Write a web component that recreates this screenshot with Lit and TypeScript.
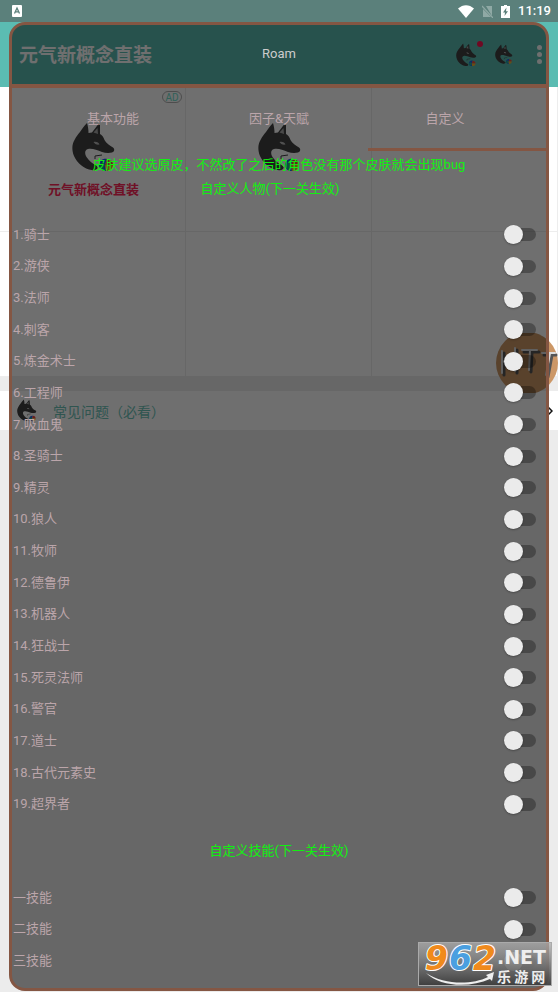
import { LitElement, html, css, svg } from "lit";
import { customElement, property, state } from "lit/decorators.js";
import { classMap } from "lit/directives/class-map.js";

@customElement("wolf-icon")
class WolfIcon extends LitElement {
  static styles = css`
    :host { display: block; }
    svg { display: block; width: 100%; height: auto; }
  `;
  render() {
    return html`<svg viewBox="0 0 44 50" aria-hidden="true">${svg`
      <path fill="#404040" d="M15 1 C16 4 16.5 8 16.5 11 L20 10.5 C22 8 24 5 26.5 2 C27.5 5 28 8 28 12 C30 13 31.5 15 32.5 18 C34 21 38 24 41 25.5 C43 27 42.500 30 40 30.500 C37 31.300 33 31 30 30 C25 28 20 26 16 27 C12.500 28 12.500 32 14.500 35 C17 39 21 42 25 44 C27 46 24 49 20 48 C12 47 5 41 2 34 C-0.500 28 0 22 2.500 18 C4 15 6 12 8 10 C10 7 12 4 15 1Z"/>
      <path fill="none" stroke="#404040" stroke-width="1" d="M27.500 3 V13 M23 37 L23 34 L30 33"/>
      <path fill="#b8b8b8" d="M21.500 20 C24 19 27 20.500 27.500 22.500 C25 23 22.500 22 21.500 20Z"/>
      <path fill="#a8a8a8" d="M21.500 10.500 L25.500 6 L26 12Z"/>
      <path fill="#1d62e8" d="M35 37 C31 36 27 39 27 43 C27 47 30 49 34 49 L33 43Z"/>
      <path fill="#1fae96" d="M27 43 L31 40 L33 43 L31 48 C28 47 27 45 27 43Z"/>
      <path fill="#f0483c" d="M35 37 C39 37 41 40 41 43 L33 43Z"/>
      <path fill="#f0b030" d="M33 43 L41 43 C41 46 38 49 34 49Z"/>
    `}</svg>`;
  }
}

@customElement("switch-row")
class SwitchRow extends LitElement {
  @property() label = "";
  static styles = css`
    :host { display: block; }
    .row { height: 100%; display: flex; align-items: center; justify-content: space-between; padding-right: 10px; }
    .name { font-size: 13px; line-height: 20px; color: #bba5aa; }
    .switch { appearance: none; margin: 0; width: 32px; height: 20px; display: grid; align-items: center; }
    .switch::before, .switch::after { content: ""; grid-area: 1 / 1; }
    .switch::before { height: 13px; margin-left: 5px; border-radius: 7px; background: rgba(0, 0, 0, 0.3); }
    .switch::after { width: 19px; height: 19px; border-radius: 50%; background: #ebebeb; box-shadow: 0 1px 2px rgba(0, 0, 0, 0.3); }
    .switch:checked::after { justify-self: end; }
  `;
  render() {
    return html`<label class="row"><span class="name">${this.label}</span><input class="switch" type="checkbox" /></label>`;
  }
}

@customElement("app-root")
class AppRoot extends LitElement {
  @state() tab = 2;

  tabs = ["基本功能", "因子&天赋", "自定义"];
  heroes = ["骑士", "游侠", "法师", "刺客", "炼金术士", "工程师", "吸血鬼", "圣骑士", "精灵", "狼人", "牧师", "德鲁伊", "机器人", "狂战士", "死灵法师", "警官", "道士", "古代元素史", "超界者"];
  skills = ["一技能", "二技能", "三技能"];

  static styles = css`
    :host {
      display: grid; position: relative; min-height: 100vh; overflow: hidden;
      grid-template-columns: minmax(0, 1fr);
      font-family: Roboto, "Noto Sans CJK SC", sans-serif;
    }
    button { border: 0; padding: 0; background: none; font: inherit; color: inherit; }
    .base, .panel { grid-area: 1 / 1; }

    .base { position: relative; background: #ececec; }
    .status { height: 22px; padding: 0 7px 0 12px; display: flex; align-items: center; justify-content: space-between; background: #5b807b; color: #fff; }
    .signals { display: flex; align-items: center; gap: 8px; }
    .signals svg, .status svg { display: block; }
    .time { font-size: 13px; font-weight: 500; line-height: 22px; }
    .bar { height: 65px; display: flex; align-items: center; padding: 0 16px 0 19px; background: #5bbcb2; }
    .title { flex: 1; margin: 0; padding-top: 3px; font-size: 19px; line-height: 28px; font-weight: 700; color: #fff; }
    .actions { display: flex; align-items: center; gap: 18px; }
    .action { position: relative; display: block; }
    .big { width: 21px; }
    .small { width: 18px; }
    .dot { position: absolute; right: -6px; top: -2px; width: 6px; height: 6px; border-radius: 50%; background: #ff1450; }
    .more { display: grid; gap: 2px; margin-left: 6px; }
    .more i { width: 5px; height: 5px; border-radius: 50%; background: #fff; }

    .grid { display: grid; grid-template-columns: repeat(3, 1fr); grid-auto-rows: 145px; background: #fff; }
    .cell { position: relative; box-sizing: border-box; border-right: 1px solid #ededed; border-bottom: 1px solid #ededed; display: flex; flex-direction: column; align-items: center; padding: 35px 0 0 2px; }
    .cell wolf-icon { width: 44px; }
    .caption { margin-top: 8px; font-size: 13px; line-height: 20px; font-weight: 700; color: #ff2858; }
    .ad { position: absolute; right: 3px; top: 4px; box-sizing: border-box; width: 20px; height: 12px; border: 1px solid #b0b0b0; border-radius: 6px; font-size: 10px; line-height: 11px; text-align: center; color: #6fe0cc; }
    .faq { margin-top: 14px; height: 39px; display: flex; align-items: center; padding: 0 5px 0 17px; background: #fff; color: #6cc4b8; font-size: 14px; text-decoration: none; }
    .faq wolf-icon { width: 20px; margin-right: 16px; }
    .faq span { flex: 1; }
    .float { position: absolute; right: 0; top: 333px; width: 62px; height: 60px; }

    .panel { z-index: 1; margin: 22px 9px 1px; border: 3px solid #845643; border-radius: 16px; background: rgba(0, 0, 0, 0.565); display: flex; flex-direction: column; min-width: 0; }
    .name { margin: 0; height: 59px; border-bottom: 4px solid #845643; text-align: center; font-size: 13px; line-height: 58px; font-weight: 400; color: #ccc; }
    .tabs { display: grid; grid-template-columns: repeat(3, 1fr); height: 60px; padding: 0 18px; font-size: 13px; color: #bba5aa; }
    .tabs button { padding-bottom: 2px; }
    .marker { height: 3px; display: grid; grid-template-columns: repeat(3, 1fr); }
    .on { background: #845643; }
    .note { margin: 0; text-align: center; font-size: 13px; line-height: 24px; color: #12f012; }
    .first { margin-top: 2px; }
    .heroes-title { padding-right: 18px; margin-bottom: 18px; }
    .skills-title { margin: 19px 0; }
    .list { display: grid; grid-auto-rows: 1fr; padding-left: 1px; }
    .heroes { min-height: 601px; }
    .skills { min-height: 95px; margin-bottom: 11px; }

    .mark { position: absolute; z-index: 2; right: 6px; bottom: 6px; width: 134px; height: 44px; overflow: visible; }
  `;

  render() {
    return html`
      <div class="base">
        <div class="status">
          <svg width="10" height="12" viewBox="0 0 10 12"><rect width="10" height="12" rx="1" fill="#fff" /><path d="M2.5 8.5 L5 3 L7.5 8.5 M3.4 6.8 H6.6" fill="none" stroke="#5b807b" stroke-width="1.3" /></svg>
          <div class="signals">
            <svg width="16" height="13" viewBox="0 0 16 13"><path d="M0 3.5 C5 -1 11 -1 16 3.5 L8 13Z" fill="#fff" /></svg>
            <svg width="11" height="13" viewBox="0 0 11 13"><path d="M4 1 H10 V11 Z M1 4 V12 H9Z" fill="#8fa9a5" /><path d="M0 1 L11 13" stroke="#8fa9a5" stroke-width="1.2" /></svg>
            <svg width="9" height="13" viewBox="0 0 9 13"><path d="M3 0 H6 V1 H9 V13 H0 V1 H3Z" fill="#fff" /><path d="M5.5 2.5 L2 7.5 H4 L3.5 11 L7 6.2 H5Z" fill="#5b807b" /></svg>
            <span class="time">11:19</span>
          </div>
        </div>
        <header class="bar">
          <h1 class="title">元气新概念直装</h1>
          <div class="actions">
            <button class="action big" aria-label="消息"><wolf-icon></wolf-icon><span class="dot"></span></button>
            <button class="action small" aria-label="主页"><wolf-icon></wolf-icon></button>
            <button class="more" aria-label="更多"><i></i><i></i><i></i></button>
          </div>
        </header>
        <div class="grid">
          <div class="cell"><span class="ad">AD</span><wolf-icon></wolf-icon><span class="caption">元气新概念直装</span></div>
          <div class="cell"><wolf-icon></wolf-icon></div>
          <div class="cell"></div>
          <div class="cell"></div>
          <div class="cell"></div>
          <div class="cell"></div>
        </div>
        <a class="faq" href="#faq">
          <wolf-icon></wolf-icon><span>常见问题（必看）</span>
          <svg width="5" height="8" viewBox="0 0 5 8"><path d="M0.5 0.5 L4 4 L0.5 7.5" fill="none" stroke="#111" stroke-width="1.5" /></svg>
        </a>
        <svg class="float" viewBox="0 0 62 60" aria-hidden="true">
          <circle cx="31" cy="30" r="31" fill="#cc9766" />
          <g fill="none" stroke-width="3" stroke-linecap="round">
            <path stroke="#555" d="M8 20 V42 M21 17 V40 M8 31 L21 27 M28 19 H43 M36 19 L35 39 M48 22 H60 M56 22 L52 44" />
            <path stroke="#ddd" stroke-width="2" d="M6 18 V40 M19 15 V38 M6 29 L19 25 M26 17 H41 M34 17 L33 37 M46 20 H59 M54 20 L50 42" />
          </g>
        </svg>
      </div>

      <main class="panel">
        <h2 class="name">Roam</h2>
        <div class="tabs" role="tablist">
          ${this.tabs.map((t, i) => html`<button role="tab" aria-selected=${this.tab === i} @click=${() => (this.tab = i)}>${t}</button>`)}
        </div>
        <div class="marker">${this.tabs.map((_, i) => html`<span class=${classMap({ on: this.tab === i })}></span>`)}</div>
        <p class="note first">皮肤建议选原皮，不然改了之后的角色没有那个皮肤就会出现bug</p>
        <p class="note heroes-title">自定义人物(下一关生效)</p>
        <div class="list heroes">${this.heroes.map((h, i) => html`<switch-row label=${`${i + 1}.${h}`}></switch-row>`)}</div>
        <p class="note skills-title">自定义技能(下一关生效)</p>
        <div class="list skills">${this.skills.map((s) => html`<switch-row label=${s}></switch-row>`)}</div>
      </main>

      <svg class="mark" viewBox="0 0 134 44" role="img" aria-label="962.NET 乐游网">
        <defs>
          <linearGradient id="shade" x2="0" y2="1"><stop offset="0" stop-color="#b0b0b0" stop-opacity="0.75" /><stop offset="0.5" stop-color="#777" stop-opacity="0.9" /><stop offset="1" stop-color="#3c3c3c" stop-opacity="0.95" /></linearGradient>
        </defs>
        <rect x="0.5" y="0.5" width="133" height="43" fill="url(#shade)" stroke="#aaa" />
        <g font-family="DejaVu Sans, sans-serif" font-weight="700" font-style="italic" font-size="33" stroke="#fff" stroke-width="2" paint-order="stroke" stroke-linejoin="round">
          <text x="7" y="28" fill="#f08a1c">9</text><text x="31" y="28" fill="#4a9fe0">6</text><text x="55" y="28" fill="#f08a1c">2</text>
        </g>
        <path d="M8 31 C26 43 54 43 70 35 L68 33 L76 30 L74 39 L72 37 C52 46 22 45 8 31Z" fill="#eee" />
        <text x="79" y="22" font-family="DejaVu Sans, sans-serif" font-weight="700" font-size="19" fill="#eee">.NET</text>
        <text x="79" y="40" font-family="Noto Sans CJK SC, sans-serif" font-weight="700" font-size="14" fill="#eee">乐 游 网</text>
      </svg>
    `;
  }
}
